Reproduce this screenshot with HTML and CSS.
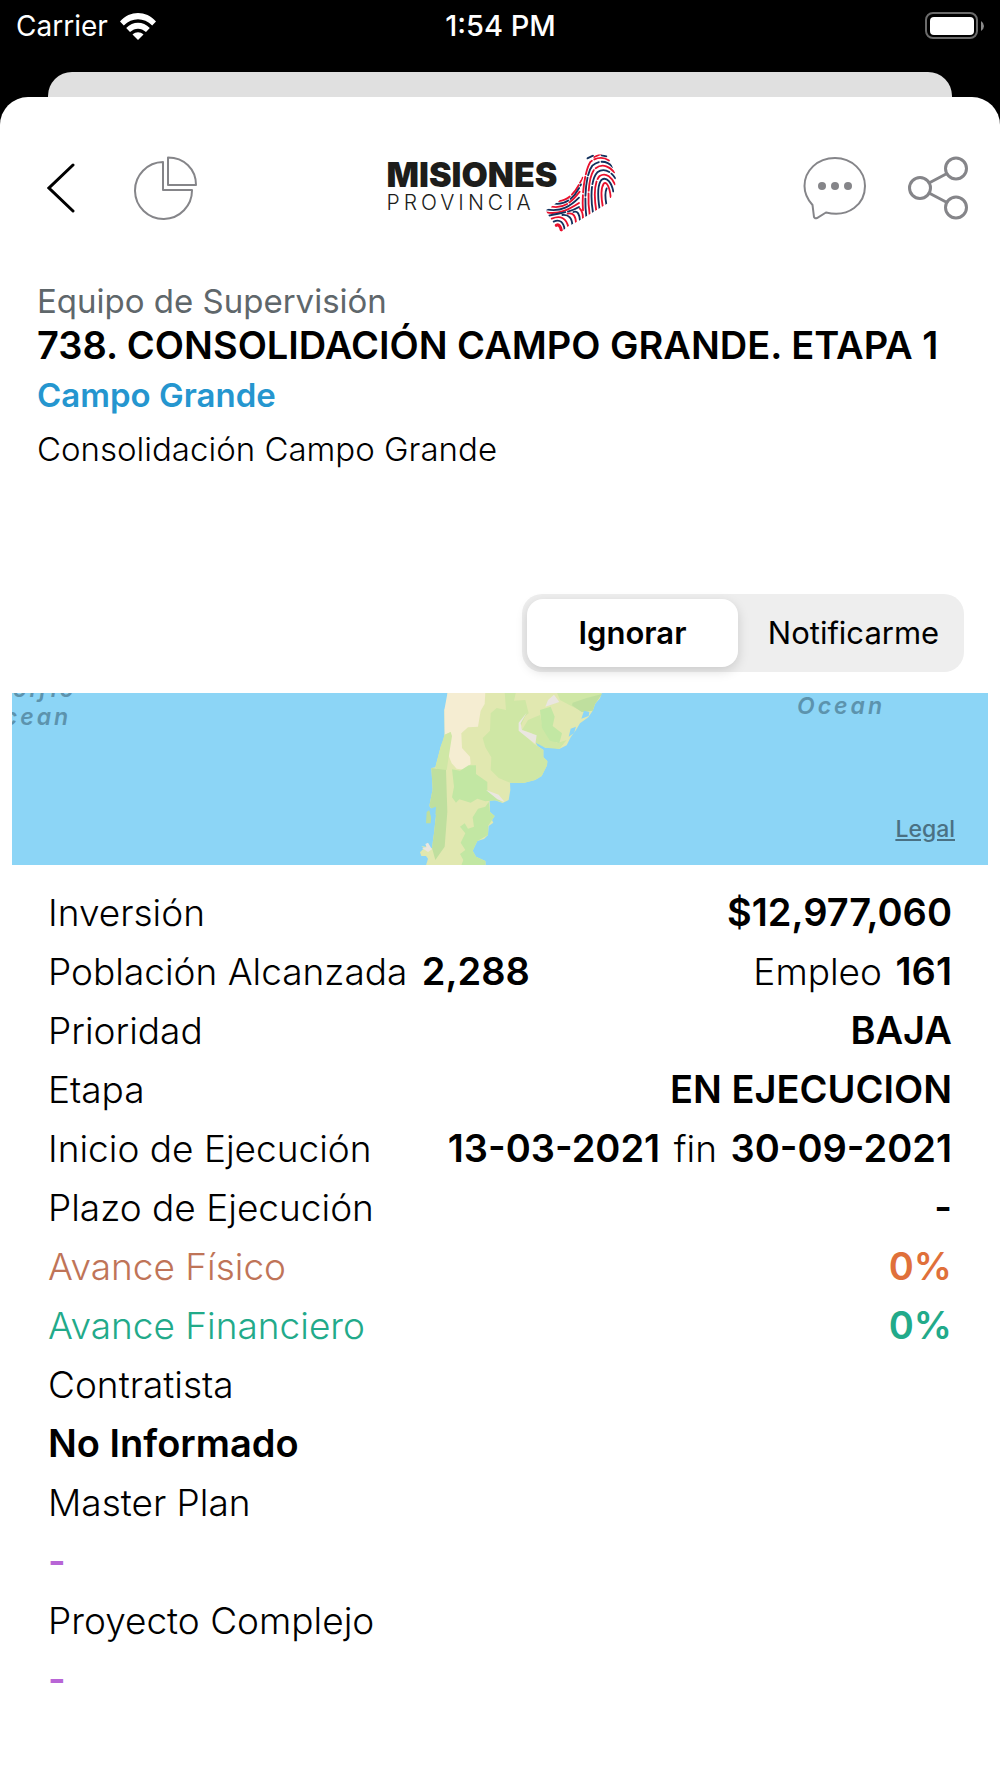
FILE: index.html
```html
<!DOCTYPE html>
<html lang="es">
  <head>
    <meta charset="UTF-8" />
    <meta name="viewport" content="width=device-width, initial-scale=1.0" />
    <title>Consolidación Campo Grande</title>
    <link rel="stylesheet" href="styles.css" />
  </head>
  <body>
    <div class="status-bar">
      <div class="carrier">
        <span>Carrier</span>
        <svg class="wifi" viewBox="0 0 36 27" aria-hidden="true">
          <path d="M0 8.5C10-2.8 26-2.8 36 8.5L32.2 12.500C24 4 12 4 3.800 12.500Z" />
          <path d="M6.200 15C13 8 23 8 29.800 15L26 19C21 14.500 15 14.500 10 19Z" />
          <path d="M12.500 21.500C16 18.500 20 18.500 23.500 21.500L18 27Z" />
        </svg>
      </div>
      <div class="time">1:54 PM</div>
      <svg class="battery" viewBox="0 0 60 28" aria-hidden="true">
        <rect x="1" y="1" width="51" height="25" rx="7" fill="none" stroke="#6b6b6b" stroke-width="2" />
        <rect x="5" y="5" width="44" height="18" rx="4" fill="#fff" />
        <path d="M56 9Q59 11 59 14Q59 17 56 19Z" fill="#8a8a8a" />
      </svg>
    </div>
    <div class="sheet-behind"></div>

    <main class="sheet">
      <header class="header">
        <div class="actions">
          <button class="icon-btn" type="button" aria-label="Volver">
            <svg width="28" height="50" viewBox="0 0 28 50">
              <path d="M26 2L2 25L26 48" fill="none" stroke="#000" stroke-width="3" stroke-linecap="round" />
            </svg>
          </button>
          <button class="icon-btn" type="button" aria-label="Avance">
            <svg width="64" height="64" viewBox="0 0 64 64">
              <g fill="none" stroke="#858589" stroke-width="2" stroke-linejoin="round">
                <path d="M30 6A28.500 28.500 0 1 0 59 34H30Z" />
                <path d="M35 1.500V29H63C63 13 51 1.500 35 1.500Z" />
              </g>
            </svg>
          </button>
        </div>

        <div class="logo">
          <div class="logo-text">
            <span class="logo-name">MISIONES</span>
            <span class="logo-sub">PROVINCIA</span>
          </div>
          <svg class="logo-mark" viewBox="16 18 213 237" aria-hidden="true">
            <clipPath id="province">
              <path d="M143 22L205 22L212 45L229 84L226 128L206 168L160 196L118 221L82 240L66 254L48 245L18 190L30 183L62 158L98 132L125 96L134 60Z" />
            </clipPath>
            <g clip-path="url(#province)" fill="none" stroke-width="5.500" stroke-linecap="round">
              <g stroke="#e8112d">
                <path d="M190 182C184 150 184 122 192 110C200 102 210 118 213 150" />
                <path d="M170 193C163 150 163 104 180 87C200 74 218 94 226 112" stroke-dasharray="90 8" />
                <path d="M150 203C143 160 145 90 165 66C188 46 212 60 224 76" stroke-dasharray="64 8" />
                <path d="M130 190C126 150 134 74 152 45C172 27 200 32 213 44" stroke-dasharray="46 8" />
                <path d="M58 162C90 160 112 130 128 92" stroke-dasharray="36 8" />
                <path d="M36 179C76 186 100 160 120 134" stroke-dasharray="48 8" />
                <path d="M20 196C58 204 90 186 118 168" />
                <path d="M36 215C64 204 80 214 86 240" />
                <path d="M50 235C58 230 63 240 65 250" stroke-width="9" />
                <path d="M84 200C102 196 108 208 109 228" />
                <path d="M120 184C128 192 130 204 130 214" />
                <path d="M164 30L184 21" />
              </g>
              <g stroke="#12305c">
                <path d="M200 172C196 150 196 135 201 124" />
                <path d="M180 188C174 150 173 112 186 98C202 88 216 108 221 134" />
                <path d="M160 198C152 150 154 96 173 76C194 60 216 76 227 94" stroke-dasharray="78 8" />
                <path d="M140 208C134 165 136 84 158 56C180 36 206 44 219 60" stroke-dasharray="54 8" />
                <path d="M46 170C84 174 108 146 124 112" stroke-dasharray="42 8" />
                <path d="M20 187C66 196 94 176 118 152" />
                <path d="M28 206C60 198 92 196 118 180" stroke-dasharray="50 8" />
                <path d="M42 224C62 214 72 228 75 248" />
                <path d="M68 204C88 202 98 214 98 236" />
                <path d="M101 195C114 190 120 202 121 222" />
                <path d="M143 34L160 26M186 25L200 28" />
              </g>
            </g>
          </svg>
        </div>

        <div class="actions actions-right">
          <button class="icon-btn" type="button" aria-label="Comentarios">
            <svg width="64" height="64" viewBox="0 0 64 64">
              <path d="M32 2C14 2 1.500 15 1.500 30C1.500 38 5 44 9.500 49L11 61Q12 63 14 62L23 56.500C46 62 62 48 62 30C62 15 49 2 32 2Z" fill="none" stroke="#858589" stroke-width="2" />
              <g fill="#858589">
                <circle cx="19" cy="30" r="4" />
                <circle cx="32" cy="30" r="4" />
                <circle cx="45" cy="30" r="4" />
              </g>
            </svg>
          </button>
          <button class="icon-btn" type="button" aria-label="Compartir">
            <svg width="60" height="64" viewBox="0 0 60 64">
              <g fill="none" stroke="#858589" stroke-width="3">
                <circle cx="12" cy="32" r="10.500" />
                <circle cx="48" cy="12.500" r="10.500" />
                <circle cx="48" cy="51.500" r="10.500" />
                <path d="M21 27L39 17.500M21 37L39 46.500" />
              </g>
            </svg>
          </button>
        </div>
      </header>

      <section class="intro">
        <p class="team">Equipo de Supervisión</p>
        <h1 class="title">738. CONSOLIDACIÓN CAMPO GRANDE. ETAPA 1</h1>
        <a class="place" href="#">Campo Grande</a>
        <p class="description">Consolidación Campo Grande</p>
      </section>

      <div class="segmented" role="radiogroup" aria-label="Notificaciones">
        <input type="radio" name="notify" id="ignore" checked />
        <label for="ignore">Ignorar</label>
        <input type="radio" name="notify" id="notify" />
        <label for="notify">Notificarme</label>
      </div>

      <div class="map">
        <svg class="map-land" viewBox="-1164 39 2928 516" preserveAspectRatio="xMidYMid slice" aria-hidden="true">
          <path fill="#e1e8b0" d="M143 36L606 36L600 55L585 72L578 92L565 112L540 130L528 150L512 172L500 196L478 207L455 201L436 203L420 192L407 188L413 198L430 210L430 232L442 243L441 256L425 288L405 300L370 309L330 308L331 330L326 360L308 369L285 361L269 362L270 396L284 408L276 420L280 428L266 438L264 465L252 477L232 483L218 512L228 530L256 543L257 556L78 556L84 536L78 528L64 528L60 517L72 505L64 498L78 500L84 488L86 504L96 504L102 460L108 405L88 378L98 328L94 264L106 262L122 200L130 180L134 160L133 90L140 75Z" />
          <path fill="#f5edd2" d="M143 36L256 36L254 72L242 92L234 140L204 142L184 160L186 204L210 230L212 252L198 270L170 266L155 250L144 222L152 156L134 164L133 90Z" />
          <path fill="#cfe7a5" d="M314 36L348 36L342 62L376 60L386 100L376 108L362 138L372 162L402 192L430 210L430 232L442 243L441 256L425 288L405 300L370 309L330 308L296 294L272 270L274 232L256 202L248 174L270 152L272 100L290 84L318 90Z" />
          <path fill="#cfe7a5" d="M152 156L156 168L140 270L120 272L106 262L122 200L134 164ZM470 36L606 36L585 72L578 92L550 96L518 80L480 60ZM384 120L420 105L428 145L470 190L500 180L478 207L436 203L407 188L396 160L366 150Z" />
          <path fill="#bfdf9e" d="M94 264L138 270L142 395L134 500L106 540L96 504L102 460L108 405L88 378L98 328ZM88 390L94 410L92 430L78 430L80 396ZM518 68L560 54L606 42L585 72L578 92L545 96L516 76Z" />
          <path fill="#c2e7a3" d="M156 268L180 272L206 256L228 256L228 282L262 306L262 332L306 366L285 361L256 364L232 356L212 368L178 358L168 368L156 352L162 320ZM420 90L452 80L464 110L458 138L486 160L478 190L450 182L426 144ZM266 366L270 396L284 408L276 420L264 438V465L232 483L218 512L228 530L256 543V556L184 556L190 540L180 522L196 510L182 488L196 460L180 440L194 430L204 446L222 440L218 412L234 386L256 380Z" />
          <path fill="#eae6e0" d="M380 98L362 130L366 150L410 166L406 192L380 172L356 152L356 128ZM444 60L462 44L478 66L436 80ZM258 330L296 344L314 366L292 358ZM76 492L84 488L96 508L84 516L66 504L80 502Z" />
          <path fill="#8cd5f6" d="M88 388L108 380L104 430L96 426ZM512 146L528 140L522 160L506 170ZM552 92L568 96L566 108L544 116Z" />
        </svg>
        <span class="sea sea-pacific">Pacific<br />Ocean</span>
        <span class="sea sea-atlantic">Ocean</span>
        <a class="legal" href="#">Legal</a>
      </div>

      <dl class="details">
        <div class="row">
          <dt>Inversión</dt>
          <dd>$12,977,060</dd>
        </div>
        <div class="row">
          <dt>Población Alcanzada <b>2,288</b></dt>
          <dd><span>Empleo</span> 161</dd>
        </div>
        <div class="row">
          <dt>Prioridad</dt>
          <dd>BAJA</dd>
        </div>
        <div class="row">
          <dt>Etapa</dt>
          <dd>EN EJECUCION</dd>
        </div>
        <div class="row">
          <dt>Inicio de Ejecución</dt>
          <dd>13-03-2021 <span>fin</span> 30-09-2021</dd>
        </div>
        <div class="row">
          <dt>Plazo de Ejecución</dt>
          <dd>-</dd>
        </div>
        <div class="row physical">
          <dt>Avance Físico</dt>
          <dd>0%</dd>
        </div>
        <div class="row financial">
          <dt>Avance Financiero</dt>
          <dd>0%</dd>
        </div>
        <div class="row stacked">
          <dt>Contratista</dt>
          <dd>No Informado</dd>
        </div>
        <div class="row stacked plan">
          <dt>Master Plan</dt>
          <dd>-</dd>
        </div>
        <div class="row stacked plan">
          <dt>Proyecto Complejo</dt>
          <dd>-</dd>
        </div>
      </dl>
    </main>
  </body>
</html>
```

FILE: styles.css
```css
* {
  box-sizing: border-box;
}

body {
  display: flex;
  flex-direction: column;
  min-height: 100vh;
  margin: 0;
  background-color: #000;
  color: #000;
  font-family: Inter, "Liberation Sans", sans-serif;
}

p,
h1,
dl,
dd {
  margin: 0;
}

/* status bar */
.status-bar {
  display: grid;
  grid-template-columns: 1fr auto 1fr;
  align-items: center;
  height: 72px;
  padding: 0 15px 20px 16px;
  color: #fff;
  font-size: 28px;
  line-height: 34px;
}

.carrier {
  display: flex;
  align-items: center;
  gap: 12px;
}

.wifi {
  width: 36px;
  height: 27px;
  fill: #fff;
}

.time {
  font-size: 29px;
  font-weight: 500;
}

.battery {
  justify-self: end;
  width: 60px;
  height: 28px;
}

/* sheets */
.sheet-behind {
  height: 25px;
  margin: 0 48px;
  border-radius: 24px 24px 0 0;
  background-color: #e0e0e0;
}

.sheet {
  flex: 1;
  padding-top: 56px;
  border-radius: 28px 28px 0 0;
  background-color: #fff;
}

.header {
  display: grid;
  grid-template-columns: 1fr auto 1fr;
  align-items: start;
  padding: 0 32px 0 34px;
}

.actions {
  display: flex;
  gap: 58px;
  padding-left: 13px;
}

.actions-right {
  justify-content: flex-end;
  gap: 41px;
  padding-left: 0;
}

.icon-btn {
  display: flex;
  align-items: center;
  height: 70px;
  padding: 0;
  border: 0;
  background: none;
}

.logo {
  display: flex;
}

.logo-text {
  display: flex;
  flex-direction: column;
  width: 158px;
  padding-top: 8px;
  color: #1d1d1b;
  line-height: 28px;
  white-space: nowrap;
}

.logo-name {
  font-size: 34px;
  font-weight: 900;
}

.logo-sub {
  font-size: 21px;
  font-weight: 300;
  letter-spacing: 4px;
}

.logo-mark {
  width: 71px;
  height: 79px;
}

.intro {
  display: flex;
  flex-direction: column;
  align-items: flex-start;
  padding: 47px 37px 0;
  font-size: 33px;
}

.team {
  color: #5f676b;
  font-weight: 400;
  line-height: 44px;
}

.title {
  font-size: 38px;
  font-weight: 600;
  line-height: 44px;
}

.place {
  color: #2596cf;
  font-weight: 600;
  line-height: 56px;
  text-decoration: none;
}

.description {
  font-weight: 300;
  line-height: 52px;
}

/* segmented control */
.segmented {
  display: grid;
  grid-template-columns: 1fr 1fr;
  gap: 10px;
  width: 442px;
  margin: 119px 36px 0 auto;
  padding: 5px;
  border-radius: 20px;
  background-color: #eee;
}

.segmented input {
  position: absolute;
  opacity: 0;
}

.segmented label {
  border-radius: 16px;
  font-size: 31px;
  font-weight: 400;
  line-height: 68px;
  text-align: center;
}

.segmented input:checked + label {
  background-color: #fff;
  box-shadow: 0 4px 12px rgba(0, 0, 0, 0.15);
  font-weight: 600;
}

/* map */
.map {
  position: relative;
  height: 172px;
  margin: 21px 12px 0;
  overflow: hidden;
  background-color: #8cd5f6;
}

.map-land {
  display: block;
  width: 100%;
  height: 100%;
}

.sea {
  position: absolute;
  color: #5c93ad;
  font-size: 23px;
  font-style: italic;
  font-weight: 600;
  letter-spacing: 3px;
  line-height: 28px;
  text-align: center;
}

.sea-pacific {
  top: -18px;
  left: -34px;
}

.sea-atlantic {
  top: -1px;
  right: 103px;
}

.legal {
  position: absolute;
  right: 33px;
  bottom: 22px;
  color: #4a7184;
  font-size: 23px;
  font-weight: 500;
  line-height: 28px;
}

/* details */
.details {
  padding: 18px 48px 0;
  font-size: 37px;
  font-weight: 300;
  line-height: 59px;
}

.row {
  display: flex;
  justify-content: space-between;
}

.row dd,
.row b {
  font-size: 38px;
  font-weight: 600;
}

.row b {
  margin-left: 4px;
}

.row span {
  margin: 0 4px;
  font-size: 37px;
  font-weight: 300;
}

.stacked {
  flex-direction: column;
}

.physical dt {
  color: #bf7458;
}

.physical dd {
  color: #e0703a;
}

.financial {
  color: #22aa8a;
}

.plan dd {
  color: #b865d6;
}
```
